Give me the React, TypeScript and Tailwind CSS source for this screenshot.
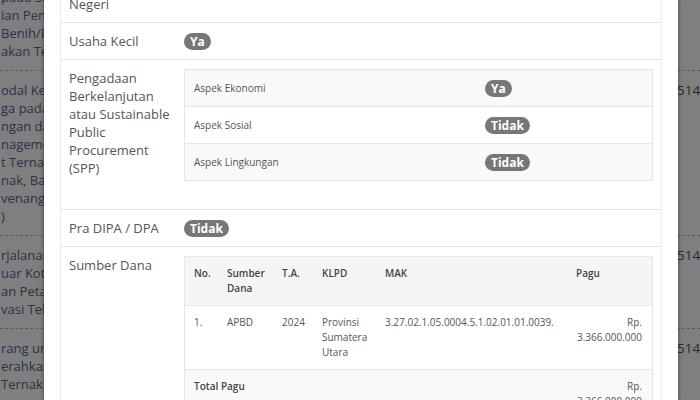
import React from "react";

type Group = { lines: string[]; code?: string };

const pageRows: Group[] = [
  {
    lines: [
      "Belanja Pengadaan Bahan",
      "pada Sumber Daya",
      "ian Pengadaan",
      "Benih/Bibit Ternak",
      "akan Ternak",
    ],
  },
  {
    code: "5144",
    lines: [
      "odal Kerja Kelompok",
      "ga pada Dinas",
      "ngan dan Kesehatan",
      "nagement Ternak",
      "t Ternak Unggul",
      "nak, Bahan Pakan",
      "venangan Provinsi",
      ")",
    ],
  },
  {
    code: "5145",
    lines: ["rjalanan Dinas", "uar Kota Dalam", "an Petani Ternak", "vasi Teknologi"],
  },
  {
    code: "5147",
    lines: ["rang untuk", "erahkan kepada", "Ternak Pada Kelompok"],
  },
];

function Badge({ children }: { children: React.ReactNode }) {
  return (
    <span className="inline-block rounded-full bg-[#777] px-[6px] align-middle text-[12px] font-bold leading-[17px] text-white">
      {children}
    </span>
  );
}

function Row({ label, children }: { label: React.ReactNode; children?: React.ReactNode }) {
  return (
    <div className="grid grid-cols-[123px_1fr] border-t border-[#e6e6e6] first:border-t-0">
      <div className="px-[8px] py-[9px] text-[13px] leading-[18px] text-[#555]">{label}</div>
      <div className="flex flex-col py-[9px] pr-[8px] leading-[18px]">{children}</div>
    </div>
  );
}

const aspek = [
  { name: "Aspek Ekonomi", value: "Ya" },
  { name: "Aspek Sosial", value: "Tidak" },
  { name: "Aspek Lingkungan", value: "Tidak" },
];

const dana = "grid grid-cols-[33px_55px_40px_63px_191px_1fr]";
const cell = "px-[9px] py-[9px]";

export default function App() {
  return (
    <div className="relative h-[400px] w-[700px] overflow-hidden bg-white font-['Open_Sans',sans-serif]">
      {/* page behind the dialog */}
      <div className="-mt-[41px]">
        {pageRows.map((row, i) => (
          <div
            key={i}
            className="grid grid-cols-[677px_1fr] border-t border-dashed border-[#bbb] py-[10px] text-[13px] leading-[18px]"
          >
            <div className="whitespace-nowrap pl-[1px] text-[#4a6a96]">
              {row.lines.map((l, j) => (
                <div key={j}>{l}</div>
              ))}
            </div>
            <div className="text-[13.5px] text-[#555]">{row.code}</div>
          </div>
        ))}
      </div>

      <div className="absolute inset-0 bg-black/50" />

      {/* dialog */}
      <div className="absolute left-[44px] top-0 h-[400px] w-[634px] bg-white px-[16px] shadow-[0_0_4px_rgba(0,0,0,0.5)]">
        <div className="-mt-[33px] border border-[#eee]">
          <Row
            label={
              <>
                Produk Dalam
                <br />
                Negeri
              </>
            }
          />
          <Row label="Usaha Kecil">
            <div className="flex h-[18px] items-center">
              <Badge>Ya</Badge>
            </div>
          </Row>
          <Row label="Pengadaan Berkelanjutan atau Sustainable Public Procurement (SPP)">
            <div className="mb-[19px] border border-[#e6e6e6]">
              {aspek.map((a, i) => (
                <div
                  key={a.name}
                  className={
                    "grid grid-cols-[290px_1fr] border-t border-[#e6e6e6] first:border-t-0 " +
                    (i % 2 === 0 ? "bg-[#f9f9f9]" : "bg-white")
                  }
                >
                  <div className="px-[9px] py-[9px] text-[10px] leading-[18px] text-[#555]">{a.name}</div>
                  <div className="flex h-[36px] items-center px-[10px]">
                    <Badge>{a.value}</Badge>
                  </div>
                </div>
              ))}
            </div>
          </Row>
          <Row label="Pra DIPA / DPA">
            <div className="flex h-[18px] items-center">
              <Badge>Tidak</Badge>
            </div>
          </Row>
          <Row label="Sumber Dana">
            <div className="border border-[#e6e6e6] text-[10px] leading-[15px] text-[#555]">
              <div className={dana + " bg-[#f5f5f5] font-semibold text-[#444]"}>
                <div className={cell}>No.</div>
                <div className={cell}>Sumber Dana</div>
                <div className={cell}>T.A.</div>
                <div className={cell}>KLPD</div>
                <div className={cell}>MAK</div>
                <div className={cell}>Pagu</div>
              </div>
              <div className={dana + " border-t border-[#e6e6e6] bg-white"}>
                <div className={cell}>1.</div>
                <div className={cell}>APBD</div>
                <div className={cell}>2024</div>
                <div className={cell}>Provinsi Sumatera Utara</div>
                <div className={cell}>3.27.02.1.05.0004.5.1.02.01.01.0039.</div>
                <div className="py-[9px] pl-[9px] pr-[10px] text-right">Rp. 3.366.000.000</div>
              </div>
              <div className="grid grid-cols-[382px_1fr] border-t border-[#e6e6e6] bg-[#f9f9f9]">
                <div className={cell + " font-semibold text-[#444]"}>Total Pagu</div>
                <div className="py-[9px] pl-[9px] pr-[10px] text-right">Rp. 3.366.000.000</div>
              </div>
            </div>
          </Row>
        </div>
      </div>
    </div>
  );
}
